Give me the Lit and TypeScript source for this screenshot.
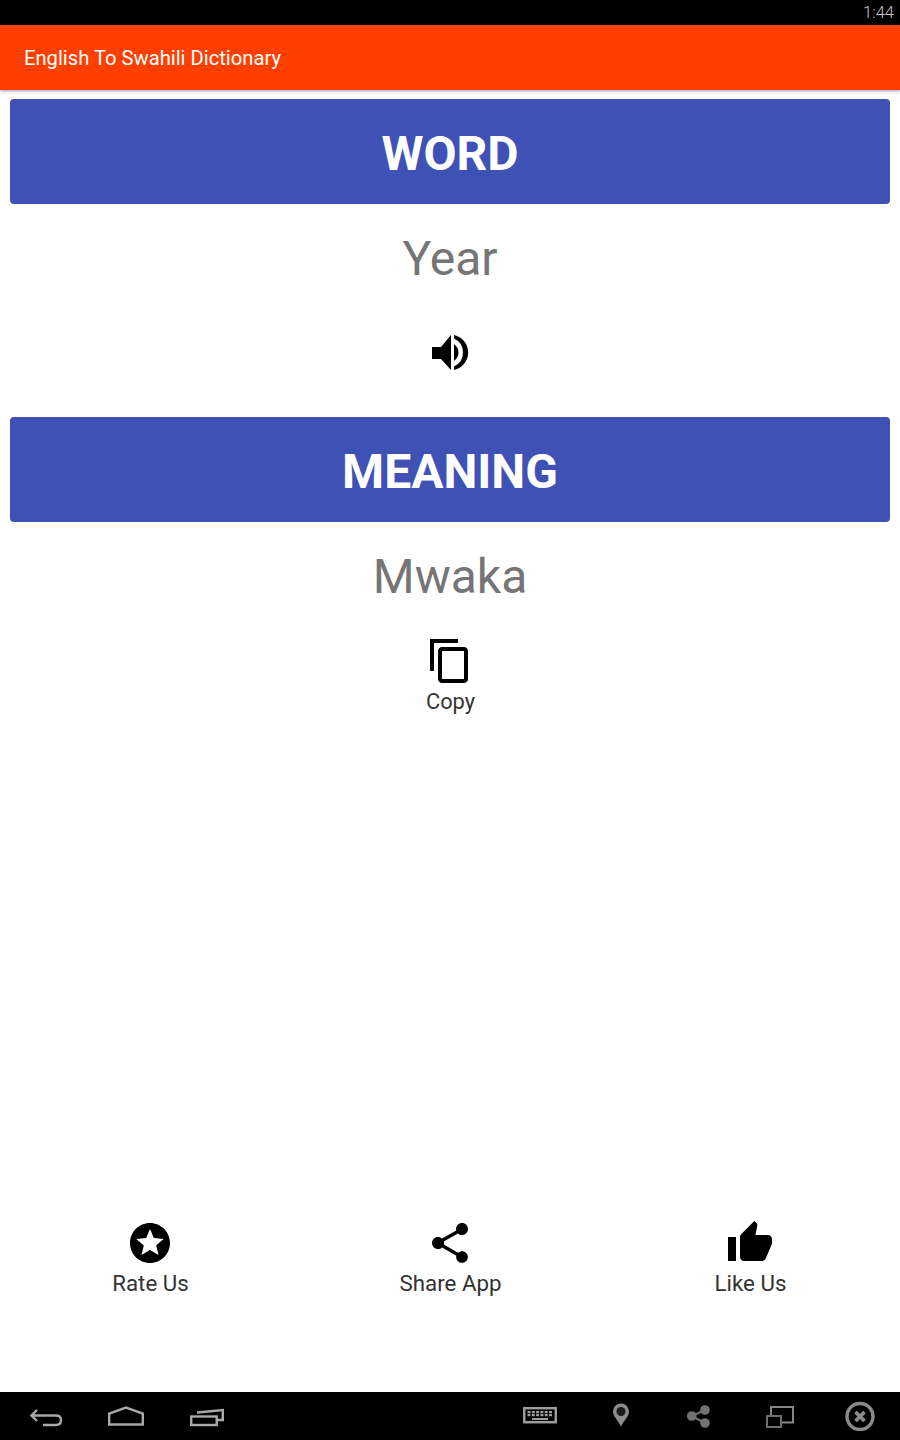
import { LitElement, html, css, svg } from "lit";
import { customElement } from "lit/decorators.js";

const P = {
  copy: "M16 1H2v16h2V3h12V1zm3 4H8c-1.1 0-2 .9-2 2v14c0 1.1.9 2 2 2h11c1.1 0 2-.9 2-2V7c0-1.1-.9-2-2-2zm0 16H8V7h11v14z",
  share: "M18 16.08c-.76 0-1.44.3-1.96.77L8.91 12.7c.05-.23.09-.46.09-.7s-.04-.47-.09-.7l7.05-4.11c.54.5 1.25.81 2.04.81 1.66 0 3-1.34 3-3s-1.34-3-3-3-3 1.34-3 3c0 .24.04.47.09.7L8.04 9.81C7.5 9.31 6.79 9 6 9c-1.66 0-3 1.34-3 3s1.34 3 3 3c.79 0 1.5-.31 2.04-.81l7.12 4.16c-.05.21-.08.43-.08.65 0 1.61 1.31 2.92 2.92 2.92 1.61 0 2.92-1.31 2.92-2.92s-1.31-2.92-2.92-2.92z",
  thumb: "M1 21h4V9H1v12zm22-11c0-1.1-.9-2-2-2h-6.31l.95-4.57.03-.32c0-.41-.17-.79-.44-1.06L14.17 1 7.59 7.59C7.22 7.95 7 8.45 7 9v10c0 1.1.9 2 2 2h9c.83 0 1.54-.5 1.84-1.22l3.02-7.05c.09-.23.14-.47.14-.73v-1.91l-.01-.01L23 10z",
  star: "M12 2C6.47 2 2 6.48 2 12s4.47 10 10 10 10-4.48 10-10S17.52 2 12 2zm4.24 16L12 15.45 7.77 18l1.12-4.81-3.73-3.23 4.92-.42L12 5l1.92 4.53 4.92.42-3.73 3.23L16.23 18z",
};

const icon = (d: string) => html`<svg class="icon" viewBox="0 0 24 24" aria-hidden="true"><path d=${d}></path></svg>`;

const navIcon = (w: number, cls: string, body: unknown) =>
  html`<svg class=${cls} width=${w} height="30" viewBox="0 0 ${w} 30" aria-hidden="true">${body}</svg>`;

@customElement("app-root")
export class AppRoot extends LitElement {
  static styles = css`
    :host { display: block; font-family: Roboto, "Liberation Sans", sans-serif; background: #fff; }
    .page { height: 1440px; display: flex; flex-direction: column; }
    .status { height: 25px; flex: none; background: #000; color: #c4c4c4; font-size: 16.5px; font-weight: 300; display: flex; justify-content: flex-end; align-items: center; padding-right: 6px; }
    .appbar { height: 65px; flex: none; background: #ff3f00; color: #fff; font-size: 20.2px; display: flex; align-items: center; padding-left: 24px; box-shadow: 0 1px 3px rgba(0,0,0,.4); position: relative; }
    .content { flex: 1; display: flex; flex-direction: column; padding: 9px 10px 0; }
    .banner { height: 105px; box-sizing: border-box; padding-top: 4px; flex: none; background: #3f51b5; color: #fff; border-radius: 4px; font-size: 48px; font-weight: 700; display: flex; align-items: center; justify-content: center; }
    .value { height: 108px; flex: none; color: #757575; font-size: 48px; display: flex; align-items: center; justify-content: center; }
    .speak { height: 105px; flex: none; display: flex; justify-content: center; }
    .speak svg { width: 48px; height: 48px; margin-top: 17px; display: block; fill: #000; }
    .copyblock { display: flex; flex-direction: column; align-items: center; margin-top: 7px; }
    .tool { display: flex; flex-direction: column; align-items: center; color: #333; font-size: 22.3px; line-height: 26px; }
    .tool span { margin-left: 1px; }
    .copyblock .tool { font-size: 21.8px; }
    .icon { width: 48px; height: 48px; display: block; fill: #000; margin-bottom: 3px; }
    .copyblock .icon { margin-bottom: 4px; }
    .bottom { flex: none; display: grid; grid-template-columns: repeat(3, 300px); height: 173px; }
    .nav { height: 48px; flex: none; background: #000; display: flex; align-items: center; padding-left: 30px; }
    .nav svg { display: block; flex: none; fill: none; stroke: #a8a8a8; stroke-width: 2.4; }
    .nav .home { margin-left: 45px; }
    .nav .recent { margin-left: 46px; }
    .nav .kbd { margin-left: 299px; }
    .nav .pin { margin-left: 56px; }
    .nav .sh { margin-left: 58px; }
    .nav .win { margin-left: 56px; }
    .nav .close { margin-left: 51px; }
  `;

  render() {
    return html`
      <div class="page">
        <div class="status">1:44</div>
        <header class="appbar">English To Swahili Dictionary</header>
        <main class="content">
          <div class="banner">WORD</div>
          <div class="value">Year</div>
          <div class="speak">
            <svg viewBox="0 0 48 48" aria-hidden="true">
              <path d="M6 18h9L25 6v35L15 30H6z"></path>
              <path d="M28 6A17.900 17.900 0 0 1 28 41V37.500A15.400 15.400 0 0 0 28 9.500z"></path>
              <path d="M28 15A10.300 10.300 0 0 1 28 32z"></path>
            </svg>
          </div>
          <div class="banner">MEANING</div>
          <div class="value">Mwaka</div>
          <div class="copyblock">
            <div class="tool">${icon(P.copy)}<span>Copy</span></div>
          </div>
        </main>
        <div class="bottom">
          <div class="tool">${icon(P.star)}<span>Rate Us</span></div>
          <div class="tool">${icon(P.share)}<span>Share App</span></div>
          <div class="tool">${icon(P.thumb)}<span>Like Us</span></div>
        </div>
        <nav class="nav">
          ${navIcon(33, "back", svg`<path d="M7 9 1.500 14.500 7 20M1.500 14.500H26C29.500 14.500 31 16.500 31 19C31 22 29 24 26 24H13"></path>`)}
          ${navIcon(36, "home", svg`<path d="M1.200 23.500V12.500L18 6.500 34.800 12.500V23.500Z"></path>`)}
          ${navIcon(34, "recent", svg`<rect x="1.200" y="15.500" width="25.500" height="8.500"></rect><path d="M7 11.500 32.800 9V19H27"></path>`)}
          ${navIcon(34, "kbd", svg`<rect x="1.200" y="7.200" width="31.600" height="14" stroke="#9c9c9c" stroke-width="2.500"></rect><path d="M4.500 11.200H29.500M4.500 14.200H29.500" stroke="#9c9c9c" stroke-width="2.200" stroke-dasharray="3 1.300"></path><path d="M9 18H25" stroke="#9c9c9c" stroke-width="2"></path>`)}
          ${navIcon(16, "pin", svg`<path d="M8 26C6 20 0 16 0 10.500a8 8 0 0 1 16 0C16 16 10 20 8 26z" fill="#8c8c8c" stroke="none"></path><circle cx="8" cy="10.500" r="4.500" fill="#1a1a1a" stroke="none"></circle>`)}
          ${navIcon(23, "sh", svg`<g fill="#737373" stroke="#737373" stroke-width="2"><circle cx="18" cy="9" r="3.800"></circle><circle cx="4.700" cy="15" r="3.800"></circle><circle cx="18" cy="22" r="3.800"></circle><path d="M18 9 4.700 15 18 22" fill="none"></path></g>`)}
          ${navIcon(28, "win", svg`<g stroke="#868686" stroke-width="2"><path d="M5 14V6H27V21.500H16"></path></g><rect x="1" y="15" width="14" height="11" stroke="#6f6f6f" stroke-width="2"></rect>`)}
          ${navIcon(30, "close", svg`<circle cx="15" cy="15.500" r="13" stroke="#8a8a8a" stroke-width="3.400"></circle><path d="M10.500 11 19.500 20M19.500 11 10.500 20" stroke="#8a8a8a" stroke-width="3.800"></path>`)}
        </nav>
      </div>
    `;
  }
}
